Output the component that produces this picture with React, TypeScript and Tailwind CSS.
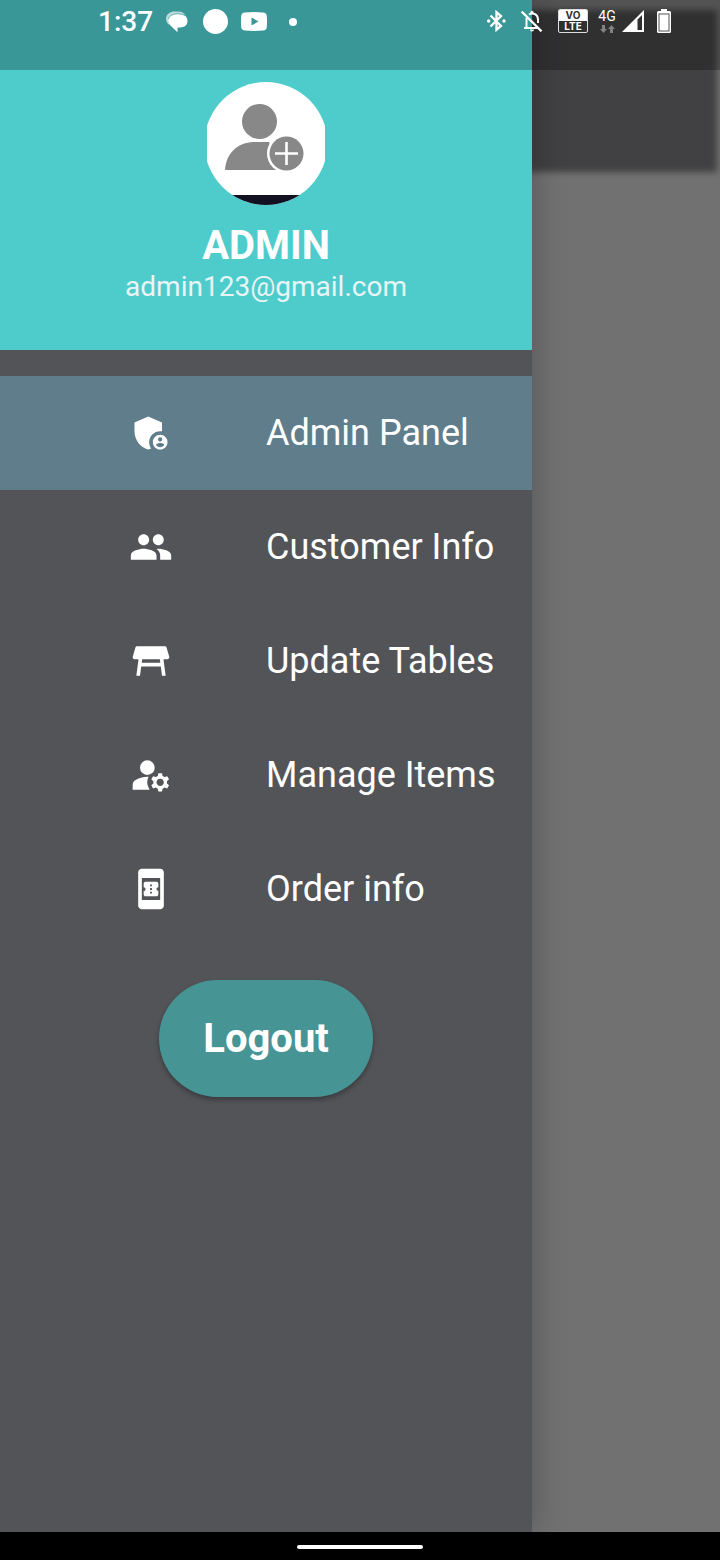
import type { ReactNode } from "react";
import {
  MdAdminPanelSettings,
  MdBookOnline,
  MdManageAccounts,
  MdPeople,
  MdTableRestaurant,
} from "react-icons/md";

const items: { label: string; icon: ReactNode; active?: boolean }[] = [
  { label: "Admin Panel", icon: <MdAdminPanelSettings />, active: true },
  { label: "Customer Info", icon: <MdPeople /> },
  { label: "Update Tables", icon: <MdTableRestaurant /> },
  { label: "Manage Items", icon: <MdManageAccounts /> },
  { label: "Order info", icon: <MdBookOnline /> },
];

function StatusBar() {
  return (
    <header className="absolute inset-x-0 top-0 z-20 flex h-[70px] items-start justify-between bg-black/26 pl-[98px] pr-[49px] text-white">
      <div className="flex h-[43px] items-center">
        <span className="w-[54px] whitespace-nowrap text-[28px] font-medium leading-none">1:37</span>
        <svg className="ml-[14px] h-[22px] w-[22px]" viewBox="0 0 22 22" aria-hidden="true">
          <path d="M0 8C0 3 4 .5 9 .5h3c4 0 6 1.500 7.500 4L4 6 3 14C1 12 0 10 0 8z" fill="#fff" opacity=".65" />
          <path d="M2.500 9.500C2.500 5 6 3 12 3s9.500 2.500 9.500 7-3.500 6.500-8.500 6.500h-1.500v4.700L6 16C4 14.500 2.500 12.500 2.500 9.500z" fill="#fff" />
          <path d="M2.200 8C4 3 12 1 19 4.500" fill="none" stroke="#3a9797" strokeWidth=".7" />
        </svg>
        <span className="ml-[15px] h-[25px] w-[25px] rounded-full bg-white" />
        <svg className="ml-[13px] h-[19px] w-[26px]" viewBox="0 0 26 19" aria-hidden="true">
          <path fillRule="evenodd" fill="#fff" d="M4 .4Q13-.4 22 .4Q25.600.7 25.800 4Q26.200 9.500 25.800 15Q25.600 18.300 22 18.600Q13 19.400 4 18.600Q.4 18.300.2 15Q-.2 9.500.2 4Q.4.700 4 .4ZM10.500 5.500V13.500L17.500 9.500Z" />
        </svg>
        <span className="ml-[22px] h-2 w-2 rounded-full bg-white" />
      </div>
      <div className="flex h-[42px] items-center">
        <svg className="h-[22px] w-[19px]" viewBox="0 0 19 22" fill="none" stroke="#fff" strokeWidth="2.300" aria-hidden="true">
          <path d="M3.500 5.500 14 16 9.500 19.800V2.200L14 6 3.500 16.500" />
          <circle cx="1.700" cy="11" r="1.700" fill="#fff" stroke="none" />
          <circle cx="17" cy="11" r="1.700" fill="#fff" stroke="none" />
        </svg>
        <svg className="ml-[15px] h-[22px] w-[22px]" viewBox="0 0 22 22" fill="none" stroke="#fff" strokeWidth="2" aria-hidden="true">
          <path d="M.7 1.500 20.500 21.300" strokeWidth="2.300" />
          <path d="M5.500 8V17M3 18H16M8 4.500C12 2 17 4.500 17 9.500V13" />
          <path d="M9.500 3V2.200a1.500 1.500 0 0 1 3 0V3z" fill="#fff" stroke="none" />
          <path d="M9 19.500h4a2 2 0 0 1-4 0z" fill="#fff" stroke="none" />
        </svg>
        <span className="ml-[15px] flex h-6 w-[30px] flex-col overflow-hidden rounded-[2px] border border-[#dddddd] text-center font-[Inter,sans-serif] text-[10px] font-bold leading-[11px]">
          <span className="h-[11px] bg-white text-[#303031]">VO</span>
          <span className="h-[11px]">LTE</span>
        </span>
        <span className="ml-[10px] flex w-[18px] flex-col items-center">
          <span className="text-[14px] leading-[14px]">4G</span>
          <svg className="mt-[2px] h-2 w-[15px]" viewBox="0 0 15 8" fill="#828282" aria-hidden="true">
            <path d="M2 0h3v4h2L3.500 8 0 4h2zM10 8h3V4h2L11.500 0 8 4h2z" />
          </svg>
        </span>
        <svg className="ml-[6px] h-[22px] w-[22px]" viewBox="0 0 22 22" aria-hidden="true">
          <path fillRule="evenodd" fill="#fff" d="M0 22 22 0V22ZM15.500 9.500V20H20V5Z" />
        </svg>
        <svg className="ml-[13px] h-6 w-[14px]" viewBox="0 0 14 24" aria-hidden="true">
          <path d="M4 0h6v2h2.500Q14 2 14 3.500v19q0 1.500-1.500 1.500h-11Q0 24 0 22.500v-19Q0 2 1.500 2H4z" fill="#fff" />
          <rect x="2" y="5" width="10" height="17" fill="none" stroke="#555" />
        </svg>
      </div>
    </header>
  );
}

function Avatar() {
  return (
    <svg className="h-[123px] w-[118px]" viewBox="0 0 118 123" role="img" aria-label="Profile photo">
      <defs>
        <clipPath id="avatar-clip">
          <circle cx="59" cy="61.500" r="61.500" />
        </clipPath>
      </defs>
      <g clipPath="url(#avatar-clip)">
        <rect width="118" height="123" fill="#fff" />
        <rect y="113" width="118" height="10" fill="#111122" />
        <circle cx="52.500" cy="39.500" r="17.500" fill="#888" />
        <path d="M18 88C19 70 32 60 48 60H62L74 88Z" fill="#888" />
        <circle cx="79.500" cy="71.500" r="19.500" fill="#fff" />
        <circle cx="79.500" cy="71.500" r="17" fill="#888" />
        <path d="M68 71.500H91M79.500 60V83" stroke="#fff" strokeWidth="2.600" />
      </g>
    </svg>
  );
}

export default function App() {
  return (
    <div className="relative flex min-h-screen flex-col overflow-hidden bg-black font-[Roboto,sans-serif]">
      <StatusBar />
      <div className="flex flex-1 overflow-hidden bg-[#717171]">
        <aside className="z-10 w-[73.9%] shrink-0 bg-[#535458] shadow-[0_0_32px_rgba(0,0,0,0.25)]">
          <div className="flex h-[350px] flex-col items-center bg-[#4ecccc] pt-[82px]">
            <Avatar />
            <h1 className="mt-[21px] text-[40px] font-bold leading-10 text-white">ADMIN</h1>
            <p className="mt-[5px] text-[28px] leading-8 text-[#e8f5f5]">admin123@gmail.com</p>
          </div>
          <nav className="mt-[26px]">
            <ul>
              {items.map((item) => (
                <li key={item.label}>
                  <a
                    href="#"
                    aria-current={item.active ? "page" : undefined}
                    className={`flex h-[114px] items-center whitespace-nowrap pl-32 text-white ${item.active ? "bg-[#607d8b]" : ""}`}
                  >
                    <span className="flex w-[45px] justify-center text-[44px]">{item.icon}</span>
                    <span className="ml-[93px] text-[36px] leading-10">{item.label}</span>
                  </a>
                </li>
              ))}
            </ul>
          </nav>
          <div className="mt-[34px] flex justify-center">
            <button
              type="button"
              className="rounded-full bg-[#479494] px-11 py-[34px] text-[40px] font-bold leading-[49px] text-white shadow-[0_3px_5px_rgba(0,0,0,0.3)]"
            >
              Logout
            </button>
          </div>
        </aside>
        <div className="min-w-0 flex-1">
          <div className="-ml-4 mr-[3px] mt-[10px] h-[162px] bg-[#414143] blur-[3px]" />
        </div>
      </div>
      <footer className="flex h-7 items-center justify-center bg-black pt-[2px]">
        <span className="h-1 w-[126px] rounded-full bg-white" />
      </footer>
    </div>
  );
}
